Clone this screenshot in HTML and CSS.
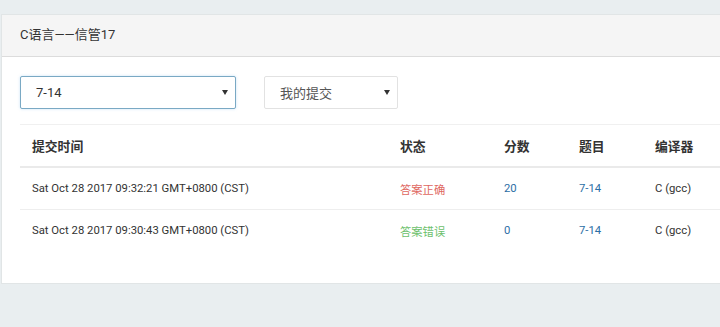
FILE: index.html
```html
<!DOCTYPE html>
<html lang="zh-CN">
<head>
  <meta charset="UTF-8">
  <meta name="viewport" content="width=device-width, initial-scale=1.0">
  <title>C语言——信管17</title>
  <link rel="stylesheet" href="styles.css">
</head>
<body>
  <div class="page">
    <div class="panel">
      <div class="panel-heading">C语言——信管17</div>
      <div class="panel-body">
        <div class="toolbar">
          <div class="select select-problem focused">
            <span>7-14</span>
            <svg class="caret" width="6" height="5" viewBox="0 0 6 5"><path d="M0 0h6L3 5z" fill="#333"/></svg>
          </div>
          <div class="select select-owner">
            <span>我的提交</span>
            <svg class="caret" width="6" height="5" viewBox="0 0 6 5"><path d="M0 0h6L3 5z" fill="#333"/></svg>
          </div>
        </div>

        <table class="submissions">
          <thead>
            <tr>
              <th class="col-time">提交时间</th>
              <th class="col-status">状态</th>
              <th class="col-score">分数</th>
              <th class="col-problem">题目</th>
              <th class="col-compiler">编译器</th>
            </tr>
          </thead>
          <tbody>
            <tr>
              <td>Sat Oct 28 2017 09:32:21 GMT+0800 (CST)</td>
              <td class="status-ok">答案正确</td>
              <td class="link">20</td>
              <td class="link">7-14</td>
              <td>C (gcc)</td>
            </tr>
            <tr>
              <td>Sat Oct 28 2017 09:30:43 GMT+0800 (CST)</td>
              <td class="status-wrong">答案错误</td>
              <td class="link">0</td>
              <td class="link">7-14</td>
              <td>C (gcc)</td>
            </tr>
          </tbody>
        </table>
      </div>
    </div>
  </div>
</body>
</html>
```

FILE: styles.css
```css
body {
  margin: 0;
  background-color: #e9eef0;
  font-family: Roboto, "Noto Sans CJK SC", sans-serif;
  font-size: 12px;
  color: #333;
  overflow: hidden;
}

.page {
  padding: 14px 0 0 1px;
}

.panel {
  width: 820px;
  background-color: #fff;
  border: 1px solid #e1e5e6;
  border-right: none;
}

.panel-heading {
  height: 41px;
  line-height: 40px;
  padding: 0 18px;
  background-color: #f5f5f5;
  border-bottom: 1px solid #dcdcdc;
  font-size: 13px;
}

.panel-body {
  padding: 19px 0 32px 18px;
}

.toolbar {
  display: flex;
  gap: 28px;
  margin-bottom: 15px;
}

.select {
  display: flex;
  align-items: center;
  justify-content: space-between;
  box-sizing: border-box;
  height: 33px;
  padding: 0 7px 0 15px;
  border: 1px solid #e2e2e2;
  border-radius: 2px;
  background-color: #fff;
  font-size: 13px;
}

.select-problem {
  width: 216px;
}

.select-owner {
  width: 134px;
  color: #555;
}

.select.focused {
  border-color: #7aa9c4;
  box-shadow: 0 0 3px rgba(102, 175, 233, 0.35);
}

.caret {
  display: block;
}

.submissions {
  border-collapse: collapse;
  table-layout: fixed;
  width: 780px;
}

.submissions th,
.submissions td {
  text-align: left;
  padding: 0 12px;
  white-space: nowrap;
}

.submissions th {
  height: 41px;
  font-size: 12.8px;
  font-weight: bold;
  border-top: 1px solid #f0f0f0;
  border-bottom: 2px solid #eaeaea;
}

.submissions td {
  height: 41px;
  font-size: 11.3px;
  border-bottom: 1px solid #eeeeee;
}

.submissions tbody tr:last-child td {
  border-bottom: none;
}

.col-time { width: 344px; }
.col-status { width: 80px; }
.col-score { width: 51px; }
.col-problem { width: 52px; }
.col-compiler { width: 133px; }

.status-ok {
  color: #e0675f;
}

.status-wrong {
  color: #6cbf6c;
}

.link {
  color: #2c6ea5;
}
```
